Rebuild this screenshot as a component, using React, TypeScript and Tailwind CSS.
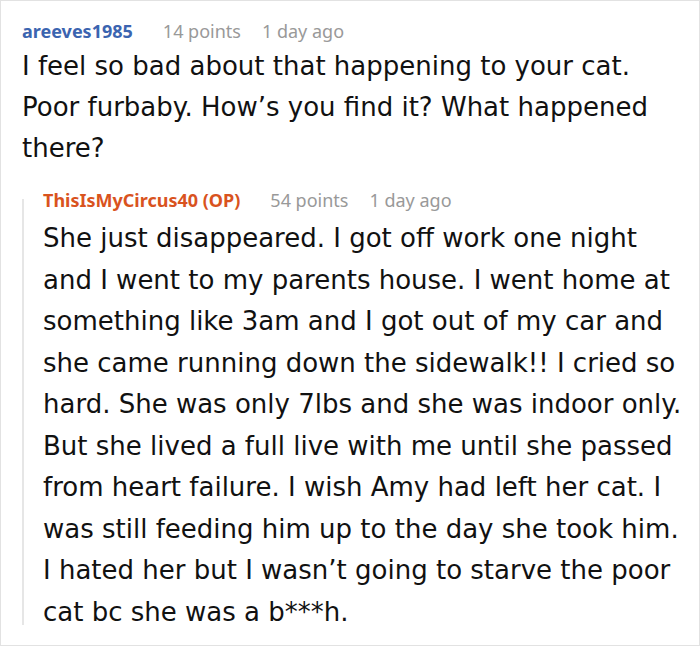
import React from 'react';

const uiFont = { fontFamily: '"Noto Sans", "Open Sans", sans-serif' };
const bodyFont = { fontFamily: '"DejaVu Sans", Verdana, sans-serif' };

function CommentHeader({ name, points, time, op }: { name: string; points: string; time: string; op?: boolean }) {
  return (
    <div className="flex items-baseline text-[18px] leading-[24px]" style={uiFont}>
      <span className={op ? 'mr-[30px] font-bold text-[#d9531e]' : 'mr-[30px] font-bold text-[#3b64b0]'}>{name}</span>
      <span className="mr-[21px] text-[#999999]">{points}</span>
      <span className="text-[#999999]">{time}</span>
    </div>
  );
}

export default function App() {
  return (
    <div className="h-[646px] w-[700px] overflow-hidden border border-[#e2e2e2] bg-white">
      <div className="pl-[21px] pr-[10px] pt-[18px]">
        <CommentHeader name="areeves1985" points="14 points" time="1 day ago" />
        <p className="mt-[3px] text-[26px] leading-[41px] text-[#111111]" style={bodyFont}>
          I feel so bad about that happening to your cat. Poor furbaby. How’s you find it? What happened there?
        </p>
        <div className="mt-[19px] flex">
          <div className="mb-[8px] mt-[11px] w-[2px] shrink-0 bg-[#e6e6e6]" />
          <div className="pl-[19px]">
            <CommentHeader name="ThisIsMyCircus40 (OP)" points="54 points" time="1 day ago" op />
            <p className="mt-[6px] text-[26px] leading-[41.5px] text-[#111111]" style={bodyFont}>
              She just disappeared. I got off work one night and I went to my parents house. I went home at something like 3am and I got out of my car and she came running down the sidewalk!! I cried so hard. She was only 7lbs and she was indoor only. But she lived a full live with me until she passed from heart failure. I wish Amy had left her cat. I was still feeding him up to the day she took him. I hated her but I wasn’t going to starve the poor cat bc she was a b***h.
            </p>
          </div>
        </div>
      </div>
    </div>
  );
}
